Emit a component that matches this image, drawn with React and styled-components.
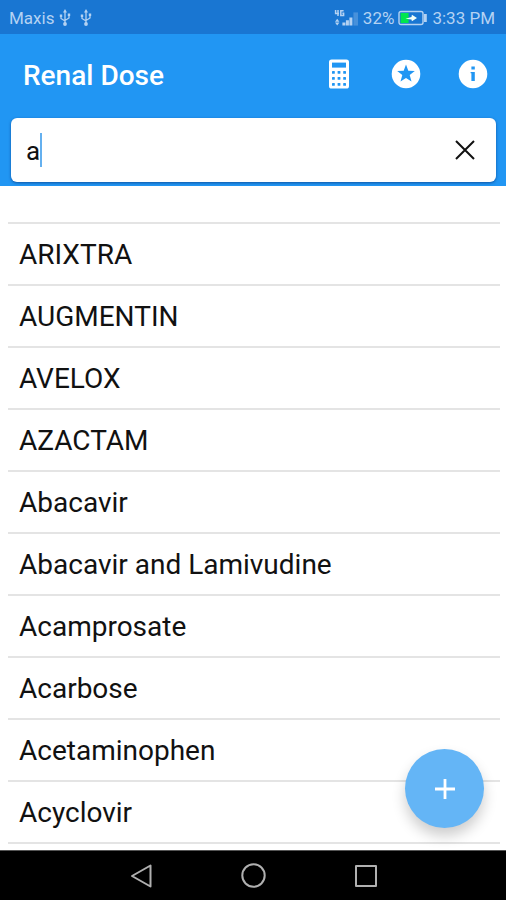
import { useState } from "react";
import styled, { createGlobalStyle } from "styled-components";

const GlobalStyle = createGlobalStyle`
  * {
    box-sizing: border-box;
  }
  body {
    margin: 0;
    background-color: white;
    font-family: Roboto, "Liberation Sans", sans-serif;
  }
  svg {
    display: block;
  }
`;

const Screen = styled.div`
  min-height: 100vh;
  display: flex;
  flex-direction: column;
`;

const StatusBar = styled.div`
  height: 34px;
  padding: 2px 11px 0 9px;
  display: flex;
  align-items: center;
  justify-content: space-between;
  background-color: #1976d2;
  color: #b4d2f2;
  font-size: 17px;
`;

const StatusGroup = styled.div`
  display: flex;
  align-items: center;
  gap: ${(props) => props.$gap}px;
`;

const Header = styled.header`
  padding: 0 10px 4px 11px;
  background-color: #2196f3;
`;

const TitleRow = styled.div`
  height: 84px;
  padding: 0 6px 4px 12px;
  display: flex;
  align-items: center;
  justify-content: space-between;
`;

const Title = styled.h1`
  margin: 0;
  padding-top: 2px;
  color: white;
  font-size: 28px;
  font-weight: 500;
`;

const Actions = styled.div`
  display: flex;
  gap: 33px;
`;

const IconButton = styled.button`
  width: 34px;
  height: 34px;
  padding: 0;
  border: none;
  background: none;
  color: ${(props) => props.$color || "white"};
  display: flex;
  align-items: center;
  justify-content: center;
  cursor: pointer;
`;

const SearchBox = styled.div`
  height: 64px;
  padding: 0 14px 0 15px;
  display: flex;
  align-items: center;
  background-color: white;
  border-radius: 6px;
  box-shadow: 0 1px 3px rgba(0, 40, 110, 0.6);
`;

const SearchField = styled.label`
  flex: 1;
  min-width: 0;
  display: flex;
  align-items: center;
  cursor: text;
`;

const SearchInput = styled.input`
  field-sizing: content;
  max-width: 100%;
  height: 36px;
  padding: 2px 0 0;
  border: none;
  outline: none;
  background: none;
  color: #111;
  font-family: inherit;
  font-size: 26px;
  caret-color: transparent;
`;

const Caret = styled.span`
  width: 2px;
  height: 34px;
  background-color: #64b0ef;
`;

const List = styled.ul`
  flex: 1;
  margin: 0;
  padding: 36px 6px 0 8px;
  list-style: none;
`;

const Item = styled.li`
  border-bottom: 2px solid #e4e4e4;
  &:first-child {
    border-top: 2px solid #e4e4e4;
  }
`;

const ItemLink = styled.a`
  height: 60px;
  padding: 0 11px;
  display: flex;
  align-items: center;
  color: #111;
  font-size: 28px;
  text-decoration: none;
`;

const Footer = styled.div`
  position: sticky;
  bottom: 0;
`;

const AddButton = styled.button`
  position: absolute;
  right: 22px;
  bottom: 72px;
  width: 79px;
  height: 79px;
  padding: 0;
  border: none;
  border-radius: 50%;
  background-color: #64b5f6;
  color: white;
  display: flex;
  align-items: center;
  justify-content: center;
  box-shadow: 0 8px 14px rgba(0, 0, 0, 0.2);
  cursor: pointer;
`;

const NavBar = styled.nav`
  height: 50px;
  padding: 0 84px;
  display: flex;
  align-items: center;
  justify-content: space-around;
  background-color: black;
  border-top: 1px solid #555;
`;

const UsbIcon = () => (
  <svg width="12" height="18" viewBox="0 0 12 18" fill="none" stroke="currentColor" strokeWidth="1.3">
    <path d="M6 3v11M2 7v2.5L6 12M10 6.5V9l-4 2.5" />
    <path d="M6 0l2 3.4H4zM.8 5.6h2.4v2.4H.8zM8.8 4.6h2.4V7H8.8z" fill="currentColor" stroke="none" />
    <circle cx="6" cy="15" r="1.9" fill="currentColor" stroke="none" />
  </svg>
);

const SignalIcon = () => (
  <svg width="26" height="18" viewBox="0 0 26 18" fill="currentColor">
    <path d="M2.6 1v3.6H6M5 1v6M10.6 1.8H7.8v4.6h2.8V4.2H9.4" fill="none" stroke="currentColor" strokeWidth="1.5" />
    <path d="M2 12.8L4.2 9.8l2.2 3zM2 13.4l2.2 3 2.2-3z" />
    <path d="M9.4 13.4h3v3.2h-3zM12.9 11.2h3v5.4h-3zM16.4 8.4h3v8.200h-3z" />
    <path d="M20.4 3.4h4.6v13.2h-4.6z" opacity=".3" />
  </svg>
);

const BatteryIcon = () => (
  <svg width="30" height="16" viewBox="0 0 30 16">
    <rect x="1" y="1.5" width="24" height="13" rx="2" fill="none" stroke="currentColor" strokeWidth="1.4" />
    <path d="M26 4h2.8v8H26z" fill="currentColor" />
    <path d="M2.6 3h8v10h-8z" fill="#00e64d" />
    <path d="M7.500 8.8l6-1.800.4-2.200 5.100 3.200-5.100 3.200-.4-1.800z" fill="#f2fff8" />
  </svg>
);

const CalculatorIcon = () => (
  <svg width="22" height="30" viewBox="0 0 22 30">
    <rect x="1" y=".5" width="20" height="29" rx="2.6" fill="white" />
    <rect x="4" y="3.6" width="14" height="5" fill="#2196f3" />
    {[12, 18, 24].map((y) =>
      [4, 9.6, 15.2].map((x) => (
        <rect key={`${x}-${y}`} x={x} y={y} width="2.8" height="2.8" rx=".6" fill="#2196f3" />
      ))
    )}
  </svg>
);

const StarIcon = () => (
  <svg width="30" height="30" viewBox="0 0 30 30">
    <circle cx="15" cy="15" r="14.3" fill="white" />
    <path d="M15 5.6l2.3 6.1 6.5.3-5.1 4.1 1.8 6.4-5.5-3.6-5.5 3.6 1.8-6.4L6.2 12l6.5-.3z" fill="#2196f3" />
  </svg>
);

const InfoIcon = () => (
  <svg width="30" height="30" viewBox="0 0 30 30">
    <circle cx="15" cy="15" r="14.3" fill="white" />
    <path d="M13.4 7.6h3.4v2.8h-3.4zM12.6 13h4.2v9h-3.4v-7.8h-.8z" fill="#2196f3" />
  </svg>
);

const CloseIcon = () => (
  <svg width="20" height="20" viewBox="0 0 20 20" fill="none" stroke="currentColor" strokeWidth="2">
    <path d="M1 1l18 18M19 1L1 19" />
  </svg>
);

const PlusIcon = () => (
  <svg width="20" height="20" viewBox="0 0 20 20" fill="none" stroke="currentColor" strokeWidth="2.8">
    <path d="M10 0v20M0 10h20" />
  </svg>
);

const NavIcon = ({ children }) => (
  <svg width="26" height="26" viewBox="0 0 26 26" fill="none" stroke="currentColor" strokeWidth="2" strokeLinejoin="round">
    {children}
  </svg>
);

const drugs = [
  "ARIXTRA",
  "AUGMENTIN",
  "AVELOX",
  "AZACTAM",
  "Abacavir",
  "Abacavir and Lamivudine",
  "Acamprosate",
  "Acarbose",
  "Acetaminophen",
  "Acyclovir",
];

const App = () => {
  const [query, setQuery] = useState("a");
  const results = drugs.filter((drug) => drug.toLowerCase().includes(query.toLowerCase()));

  return (
    <Screen>
      <GlobalStyle />
      <StatusBar>
        <StatusGroup $gap={9}>
          <StatusGroup $gap={5}>
            Maxis
            <UsbIcon />
          </StatusGroup>
          <UsbIcon />
        </StatusGroup>
        <StatusGroup $gap={4}>
          <SignalIcon />
          32%
          <BatteryIcon />
          3:33 PM
        </StatusGroup>
      </StatusBar>

      <Header>
        <TitleRow>
          <Title>Renal Dose</Title>
          <Actions>
            <IconButton aria-label="Calculator">
              <CalculatorIcon />
            </IconButton>
            <IconButton aria-label="Favourites">
              <StarIcon />
            </IconButton>
            <IconButton aria-label="Information">
              <InfoIcon />
            </IconButton>
          </Actions>
        </TitleRow>
        <SearchBox>
          <SearchField>
            <SearchInput
              type="text"
              aria-label="Search"
              value={query}
              onChange={(e) => setQuery(e.target.value)}
            />
            <Caret />
          </SearchField>
          <IconButton $color="#111" aria-label="Clear" onClick={() => setQuery("")}>
            <CloseIcon />
          </IconButton>
        </SearchBox>
      </Header>

      <List>
        {results.map((drug) => (
          <Item key={drug}>
            <ItemLink href="#">{drug}</ItemLink>
          </Item>
        ))}
      </List>

      <Footer>
        <AddButton aria-label="Add">
          <PlusIcon />
        </AddButton>
        <NavBar>
          <IconButton $color="#b0b0b0" aria-label="Back">
            <NavIcon>
              <path d="M23.5 2.5v21L5 13z" />
            </NavIcon>
          </IconButton>
          <IconButton $color="#b0b0b0" aria-label="Home">
            <NavIcon>
              <circle cx="13.5" cy="12.5" r="11.2" />
            </NavIcon>
          </IconButton>
          <IconButton $color="#b0b0b0" aria-label="Recent apps">
            <NavIcon>
              <path d="M3 3h20v20H3z" />
            </NavIcon>
          </IconButton>
        </NavBar>
      </Footer>
    </Screen>
  );
};

export default App;
